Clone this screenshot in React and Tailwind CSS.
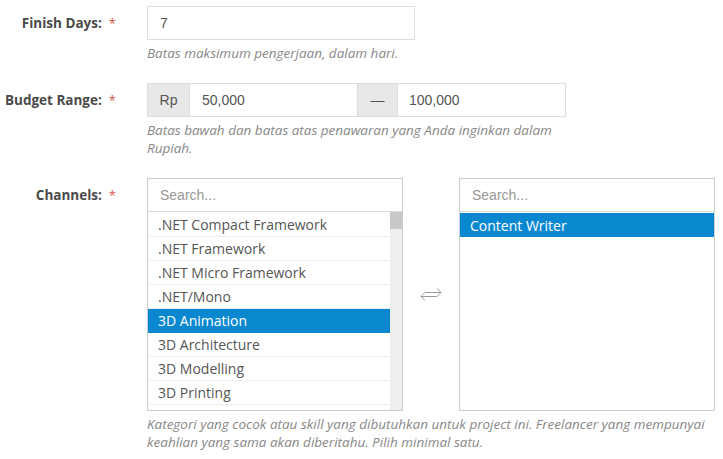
import React from "react";

const left = [
  ".NET Compact Framework",
  ".NET Framework",
  ".NET Micro Framework",
  ".NET/Mono",
  "3D Animation",
  "3D Architecture",
  "3D Modelling",
  "3D Printing",
];

function Label({ children, top }) {
  return (
    <div className={`w-[147px] shrink-0 pr-[31px] flex justify-end items-start ${top}`}>
      <span className="text-[13.5px] font-bold text-[#4a4a4a] leading-[18px] [font-family:'Open_Sans',sans-serif]">{children}</span>
      <span className="text-[13px] text-[#d9534f] leading-[18px] ml-[7px] [font-family:'Open_Sans',sans-serif]">*</span>
    </div>
  );
}

function Help({ children, w }) {
  return (
    <p className={`mt-[4px] text-[13.5px] italic leading-[18px] text-[#888] [font-family:'Open_Sans',sans-serif] ${w}`}>
      {children}
    </p>
  );
}

function SearchBox() {
  return (
    <div className="h-[33px] border-b border-[#d5dde3] flex items-center pl-[12px] text-[14px] text-[#999] [font-family:'Liberation_Sans',Arial,sans-serif]">
      Search...
    </div>
  );
}

export default function App() {
  return (
    <div className="w-[723px] h-[459px] bg-white overflow-hidden pt-[6px]">
      {/* Finish days */}
      <div className="flex">
        <Label top="pt-[8px]">Finish Days:</Label>
        <div>
          <div className="w-[268px] h-[34px] border border-[#ddd] flex items-center pl-[12px] text-[14px] text-[#555] [font-family:'Liberation_Sans',Arial,sans-serif]">
            7
          </div>
          <Help w="">Batas maksimum pengerjaan, dalam hari.</Help>
        </div>
      </div>

      {/* Budget */}
      <div className="flex mt-[21px]">
        <Label top="pt-[8px]">Budget Range:</Label>
        <div>
          <div className="w-[419px] h-[34px] border border-[#ddd] flex text-[14px] text-[#555] [font-family:'Liberation_Sans',Arial,sans-serif]">
            <div className="w-[42px] bg-[#e8e8e8] border-r border-[#ddd] flex items-center justify-center">Rp</div>
            <div className="w-[167px] flex items-center pl-[12px]">50,000</div>
            <div className="w-[41px] bg-[#e8e8e8] border-x border-[#ddd] flex items-center justify-center">—</div>
            <div className="flex-1 flex items-center pl-[11px]">100,000</div>
          </div>
          <Help w="w-[420px]">Batas bawah dan batas atas penawaran yang Anda inginkan dalam Rupiah.</Help>
        </div>
      </div>

      {/* Channels */}
      <div className="flex mt-[21px]">
        <Label top="pt-[8px]">Channels:</Label>
        <div>
          <div className="flex">
            <div className="w-[256px] h-[233px] border border-[#ccc] flex flex-col">
              <SearchBox />
              <div className="flex flex-1 overflow-hidden">
                <div className="flex-1 overflow-hidden pt-[1px] [font-family:'Open_Sans',sans-serif] text-[14px]">
                  {left.map((t) => (
                    <div
                      key={t}
                      className={`h-[24px] border-b flex items-center pl-[10px] ${
                        t === "3D Animation"
                          ? "bg-[#0a88cf] text-white border-[#0a88cf]"
                          : "text-[#555] border-[#eee]"
                      }`}
                    >
                      {t}
                    </div>
                  ))}
                </div>
                <div className="w-[12px] bg-[#eeeeee] flex flex-col">
                  <div className="h-[17px] bg-[#c9c9c9]" />
                </div>
              </div>
            </div>
            <div className="w-[56px] flex items-center justify-center">
              <svg width="24" height="14" viewBox="0 0 24 14" fill="none" stroke="#999" strokeWidth="1">
                <path d="M2 8.5 H18" />
                <path d="M6 4.5 H22" />
                <path d="M6 4.5 L2 8.5 L6 12.5" />
                <path d="M18 0.5 L22 4.5 L18 8.5" />
              </svg>
            </div>
            <div className="w-[256px] h-[233px] border border-[#ccc] flex flex-col">
              <SearchBox />
              <div className="flex-1 pt-[1px] [font-family:'Open_Sans',sans-serif] text-[14px]">
                <div className="h-[24px] bg-[#0a88cf] text-white flex items-center pl-[10px]">Content Writer</div>
              </div>
            </div>
          </div>
          <Help w="w-[572px]">
            Kategori yang cocok atau skill yang dibutuhkan untuk project ini. Freelancer yang mempunyai keahlian yang sama akan diberitahu. Pilih minimal satu.
          </Help>
        </div>
      </div>
    </div>
  );
}
